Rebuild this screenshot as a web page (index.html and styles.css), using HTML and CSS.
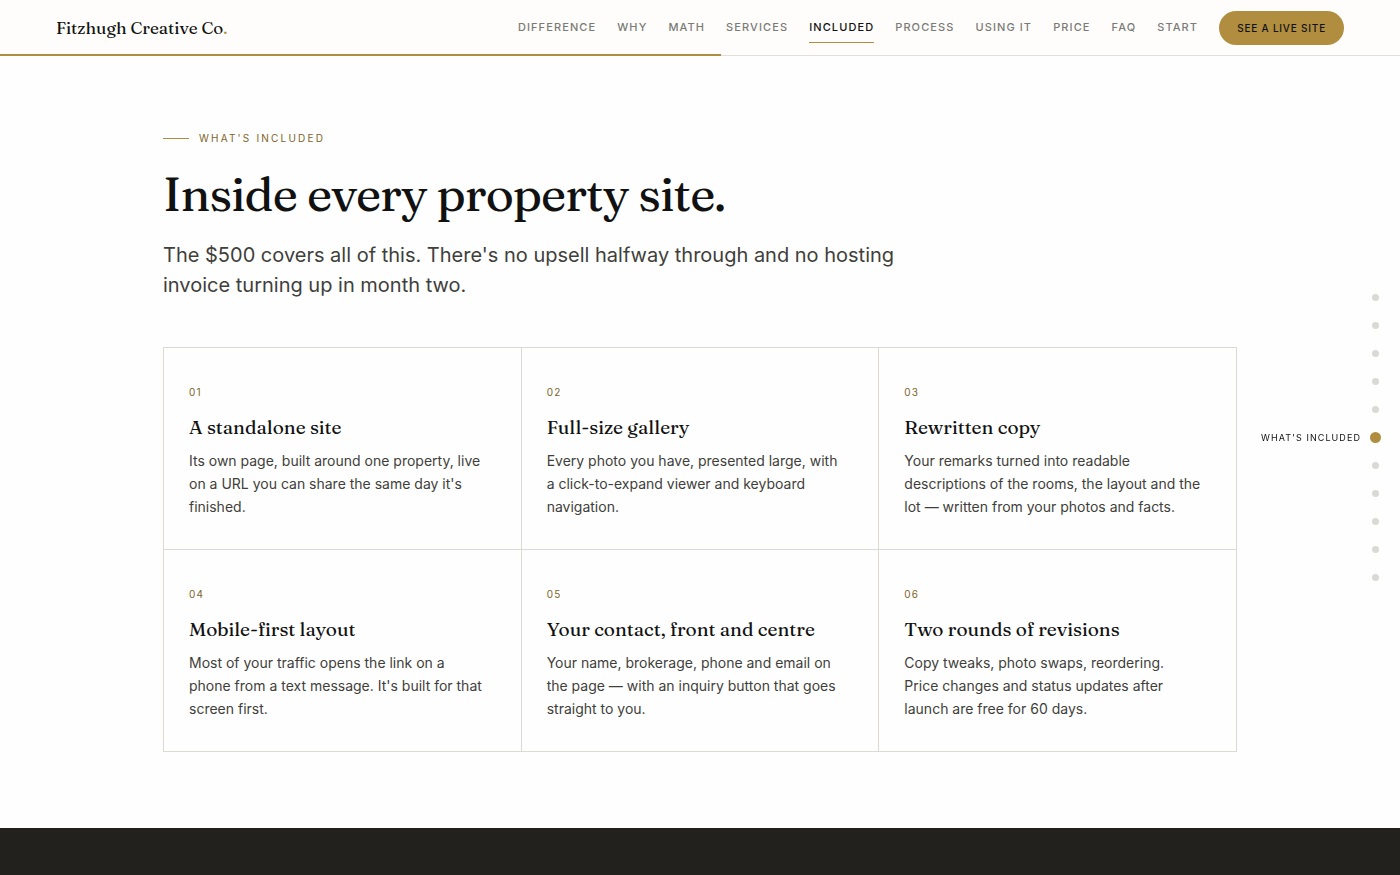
FILE: index.html
```html
<!DOCTYPE html>
<html lang="en">
<head>
    <meta charset="UTF-8">
    <meta name="viewport" content="width=device-width, initial-scale=1.0">
    <title>Fitzhugh Creative Co.</title>
    <link rel="stylesheet" href="styles.css">
</head>
<body>
    <header class="site-header">
        <a class="brand" href="#top">Fitzhugh Creative Co<span class="brand-dot">.</span></a>
        <nav class="main-nav" aria-label="Main">
            <a href="#difference">Difference</a>
            <a href="#why">Why</a>
            <a href="#math">Math</a>
            <a href="#services">Services</a>
            <a class="active" href="#included">Included</a>
            <a href="#process">Process</a>
            <a href="#using">Using it</a>
            <a href="#price">Price</a>
            <a href="#faq">FAQ</a>
            <a href="#start">Start</a>
            <a class="nav-cta" href="#live">See a live site</a>
        </nav>
        <div class="scroll-progress"></div>
    </header>

    <main>
        <section class="included" id="included">
            <div class="wrap">
                <p class="eyebrow">What's included</p>
                <h1>Inside every property site.</h1>
                <p class="lead">The $500 covers all of this. There's no upsell halfway through and no hosting invoice turning up in month two.</p>

                <div class="feature-grid">
                    <article class="feature">
                        <span class="num">01</span>
                        <h3>A standalone site</h3>
                        <p>Its own page, built around one property, live on a URL you can share the same day it's finished.</p>
                    </article>
                    <article class="feature">
                        <span class="num">02</span>
                        <h3>Full-size gallery</h3>
                        <p>Every photo you have, presented large, with a click-to-expand viewer and keyboard navigation.</p>
                    </article>
                    <article class="feature">
                        <span class="num">03</span>
                        <h3>Rewritten copy</h3>
                        <p>Your remarks turned into readable descriptions of the rooms, the layout and the lot — written from your photos and facts.</p>
                    </article>
                    <article class="feature">
                        <span class="num">04</span>
                        <h3>Mobile-first layout</h3>
                        <p>Most of your traffic opens the link on a phone from a text message. It's built for that screen first.</p>
                    </article>
                    <article class="feature">
                        <span class="num">05</span>
                        <h3>Your contact, front and centre</h3>
                        <p>Your name, brokerage, phone and email on the page — with an inquiry button that goes straight to you.</p>
                    </article>
                    <article class="feature">
                        <span class="num">06</span>
                        <h3>Two rounds of revisions</h3>
                        <p>Copy tweaks, photo swaps, reordering. Price changes and status updates after launch are free for 60 days.</p>
                    </article>
                </div>
            </div>
        </section>
        <section class="dark-band" id="process"></section>
    </main>

    <nav class="dot-nav" aria-label="Sections">
        <a href="#top"><i></i></a>
        <a href="#difference"><i></i></a>
        <a href="#why"><i></i></a>
        <a href="#math"><i></i></a>
        <a href="#services"><i></i></a>
        <a class="active" href="#included"><span>What's included</span><i></i></a>
        <a href="#process"><i></i></a>
        <a href="#using"><i></i></a>
        <a href="#price"><i></i></a>
        <a href="#faq"><i></i></a>
        <a href="#start"><i></i></a>
    </nav>
</body>
</html>
```
FILE: styles.css
```css
:root {
    --ink: #111111;
    --body: #3f3f3b;
    --muted: #7b7b76;
    --line: #dbdad3;
    --gold: #b08d3f;
    --gold-dark: #7d6428;
    --serif: Fraunces, "Liberation Serif", serif;
    --sans: Inter, "Liberation Sans", sans-serif;
}
* {
    box-sizing: border-box;
}
html, body {
    min-height: 100%;
}
body {
    display: flex;
    flex-direction: column;
    min-height: 100vh;
    margin: 0;
    font-family: var(--sans);
    color: var(--ink);
    background: #fefefe;
}
a {
    color: inherit;
    text-decoration: none;
}
main {
    flex: 1;
    display: flex;
    flex-direction: column;
}

/* header */
.site-header {
    position: sticky;
    top: 0;
    z-index: 10;
    display: flex;
    align-items: center;
    justify-content: space-between;
    height: 56px;
    padding: 0 56px;
    background: #fefdfb;
    border-bottom: 1px solid #e0dfda;
}
.brand {
    font-family: var(--serif);
    font-size: 17px;
}
.brand-dot {
    color: var(--gold);
}
.main-nav {
    display: flex;
    align-items: center;
    gap: 21px;
    font-size: 11px;
    font-weight: 500;
    letter-spacing: 0.1em;
    text-transform: uppercase;
    color: var(--muted);
    white-space: nowrap;
}
.main-nav a {
    padding: 7px 0 8px;
    line-height: 14px;
    border-bottom: 1px solid transparent;
}
.main-nav .active {
    color: var(--ink);
    border-bottom-color: var(--gold);
}
.main-nav .nav-cta {
    padding: 10px 18px;
    font-size: 10px;
    letter-spacing: 0.08em;
    border: 0;
    border-radius: 17px;
    background: var(--gold);
    color: var(--ink);
}
.scroll-progress {
    position: absolute;
    left: 0;
    bottom: -1px;
    width: 51.5%;
    height: 2px;
    background: var(--gold);
}

/* what's included */
.included {
    padding: 76px 56px;
}
.wrap {
    max-width: 1074px;
    margin: 0 auto;
}
.eyebrow {
    display: flex;
    align-items: center;
    gap: 10px;
    margin: 0 0 22px;
    font-size: 10px;
    line-height: 12px;
    letter-spacing: 0.22em;
    text-transform: uppercase;
    color: var(--gold-dark);
}
.eyebrow::before {
    content: "";
    width: 26px;
    height: 1px;
    background: var(--gold);
}
h1 {
    margin: 0 0 18px;
    font-family: var(--serif);
    font-size: 48px;
    font-weight: 400;
    line-height: 56px;
    letter-spacing: -0.02em;
}
.lead {
    max-width: 740px;
    margin: 0 0 47px;
    font-size: 20px;
    line-height: 30px;
    color: var(--body);
}
.feature-grid {
    display: grid;
    grid-template-columns: repeat(3, 1fr);
    border-top: 1px solid var(--line);
    border-left: 1px solid var(--line);
}
.feature {
    padding: 36px 25px 31px;
    border-right: 1px solid var(--line);
    border-bottom: 1px solid var(--line);
}
.num {
    display: block;
    font-size: 10px;
    line-height: 16px;
    letter-spacing: 0.12em;
    color: var(--gold-dark);
}
.feature h3 {
    margin: 14px 0 9px;
    font-family: var(--serif);
    font-size: 19px;
    font-weight: 400;
    line-height: 26px;
}
.feature p {
    margin: 0;
    padding-right: 10px;
    font-size: 14px;
    line-height: 23px;
    color: var(--body);
}
.dark-band {
    flex: 1;
    min-height: 47px;
    background: #23211d;
}

/* side dots */
.dot-nav {
    position: fixed;
    top: 50%;
    right: 19px;
    transform: translateY(-50%);
    display: flex;
    flex-direction: column;
    align-items: flex-end;
}
.dot-nav a {
    display: flex;
    align-items: center;
    gap: 9px;
    height: 28px;
    font-size: 9px;
    letter-spacing: 0.12em;
    text-transform: uppercase;
}
.dot-nav i {
    width: 7px;
    height: 7px;
    margin: 0 2px;
    border-radius: 50%;
    background: #d9d9d5;
}
.dot-nav .active i {
    width: 11px;
    height: 11px;
    margin: 0;
    background: var(--gold);
}
```
